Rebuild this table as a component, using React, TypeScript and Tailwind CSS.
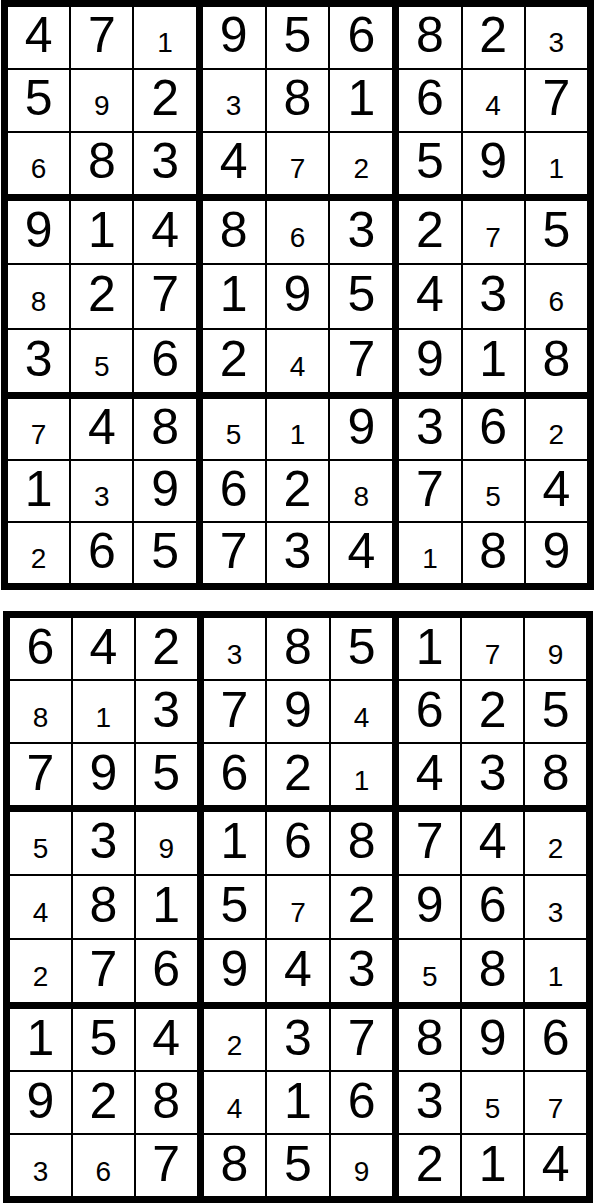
const boardA = [
  ["471956823", "001000001"],
  ["592381647", "010100010"],
  ["683472591", "100011001"],
  ["914863275", "000010010"],
  ["827195436", "100000001"],
  ["356247918", "010010000"],
  ["748519362", "100110001"],
  ["139628754", "010001010"],
  ["265734189", "100000100"],
]

const boardB = [
  ["642385179", "000100011"],
  ["813794625", "110001000"],
  ["795621438", "000001000"],
  ["539168742", "101000001"],
  ["481572963", "100010001"],
  ["276943581", "100000101"],
  ["154237896", "000100000"],
  ["928416357", "000100011"],
  ["367859214", "110001000"],
]

function Cell({ digit, small }: { digit: string; small: boolean }) {
  return (
    <div className="flex items-center justify-center bg-white pb-[4px]">
      <div className="text-[50px] leading-[56px] text-black">
        {small ? <span className="text-[28px] leading-none">{digit}</span> : digit}
      </div>
    </div>
  )
}

function Box({ rows, br, bc }: { rows: string[][]; br: number; bc: number }) {
  const cells = []
  for (let r = 0; r < 3; r++) {
    for (let c = 0; c < 3; c++) {
      const [digits, mask] = rows[br * 3 + r]
      const i = bc * 3 + c
      cells.push(<Cell key={`${r}-${c}`} digit={digits[i]} small={mask[i] === "1"} />)
    }
  }
  return <div className="grid grid-cols-3 grid-rows-3 gap-[2px] bg-black">{cells}</div>
}

function Board({ rows, className }: { rows: string[][]; className: string }) {
  const boxes = []
  for (let br = 0; br < 3; br++) {
    for (let bc = 0; bc < 3; bc++) {
      boxes.push(<Box key={`${br}-${bc}`} rows={rows} br={br} bc={bc} />)
    }
  }
  return (
    <div className={`grid grid-cols-[188fr_190fr_188fr] gap-[7px] border-[7px] border-black bg-black ${className}`}>
      {boxes}
    </div>
  )
}

export default function App() {
  return (
    <div className="w-[595px] h-[1203px] bg-white font-['Liberation_Sans',Arial,sans-serif]">
      <Board rows={boardA} className="ml-[1px] w-[593px] h-[590px] grid-rows-[188fr_193fr_183fr]" />
      <Board rows={boardB} className="ml-[3px] mt-[21px] w-[590px] h-[592px] grid-rows-[187fr_190fr_187fr]" />
    </div>
  )
}
